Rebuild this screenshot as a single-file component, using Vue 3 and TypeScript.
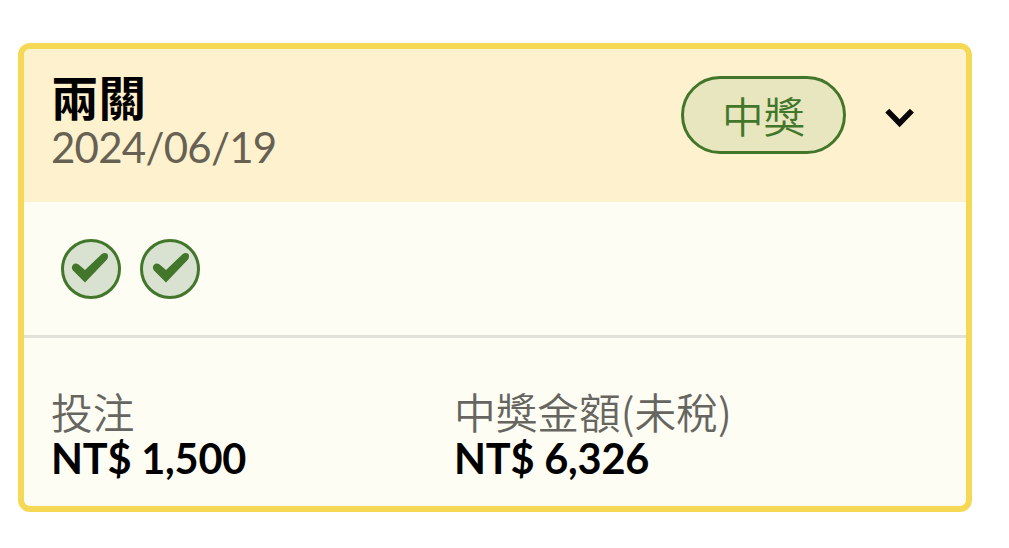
<script setup lang="ts">
const title = '兩關'
const date = '2024/06/19'
const legs: number[] = [1, 2]
const amounts = [
  { label: '投注', value: 'NT$ 1,500' },
  { label: '中獎金額(未稅)', value: 'NT$ 6,326' },
]
</script>

<template>
  <main class="page">
    <article class="card">
      <header class="head">
        <div class="heading">
          <h1>{{ title }}</h1>
          <p class="date">{{ date }}</p>
        </div>
        <span class="badge">中獎</span>
        <svg class="chevron" viewBox="0 0 30 22" fill="none">
          <path d="M2.3 3.6 14.6 16.2 26.9 3.6" stroke="#080508" stroke-width="5.6" />
        </svg>
      </header>
      <section class="legs">
        <svg v-for="leg in legs" :key="leg" class="leg" viewBox="0 0 60 60">
          <circle cx="30" cy="30" r="28.5" fill="#d9e1d0" stroke="#42762b" stroke-width="3" />
          <path
            :transform="leg === 2 ? 'translate(2 0)' : undefined"
            d="M12 31.4C8.8 27.8 13 22.4 17.3 25.3L24 30.9 40.5 15.2C43 13.2 46.4 13.8 46.9 16Q47.3 18.8 46 20.6L24 43.4Z"
            fill="#42762b"
          />
        </svg>
      </section>
      <section class="amounts">
        <div v-for="a in amounts" :key="a.label" class="amount">
          <p class="label">{{ a.label }}</p>
          <p class="value">{{ a.value }}</p>
        </div>
      </section>
    </article>
  </main>
</template>

<style>
body { background: #fff; }
</style>

<style scoped>
.page {
  box-sizing: border-box;
  height: 548px;
  padding: 43px 37px 36px 18px;
  font-family: Lato, "Noto Sans CJK TC", sans-serif;
}
.card {
  box-sizing: border-box;
  height: 469px;
  border: 6px solid #f5d954;
  border-radius: 12px;
  overflow: hidden;
  background: #fefdf4;
}
h1, p { margin: 0; white-space: nowrap; }
.head {
  box-sizing: border-box;
  height: 153px;
  display: flex;
  align-items: flex-start;
  padding: 25px 51px 0 27px;
  background: #fef2ce;
}
.heading { flex: 1; }
h1 { font-size: 47.5px; line-height: 48px; font-weight: 700; color: #000; }
.date { font-size: 42px; line-height: 50px; letter-spacing: -0.75px; color: #666153; }
.badge {
  box-sizing: border-box;
  width: 165px;
  height: 78px;
  margin-top: 2px;
  border: 3px solid #42762b;
  border-radius: 39px;
  background: #e8e6bf;
  color: #42762b;
  font-family: "Noto Sans CJK TC", sans-serif;
  font-size: 41.5px;
  font-weight: 350;
  line-height: 73px;
  text-align: center;
}
.chevron { width: 30px; height: 22px; margin: 33px 0 0 39px; }
.legs {
  box-sizing: border-box;
  height: 136px;
  display: flex;
  gap: 19px;
  padding: 37px 37px 0;
  border-bottom: 3px solid #e2e2da;
}
.leg { width: 60px; height: 60px; }
.amounts { display: flex; padding: 51px 27px 0; }
.amount { width: 403px; }
.label {
  font-family: "Noto Sans CJK TC", sans-serif;
  font-size: 41.7px;
  font-weight: 350;
  line-height: 44px;
  color: #666560;
}
.value { margin-top: 3px; font-size: 41.5px; line-height: 44px; letter-spacing: -0.2px; font-weight: 700; color: #000; }
</style>
